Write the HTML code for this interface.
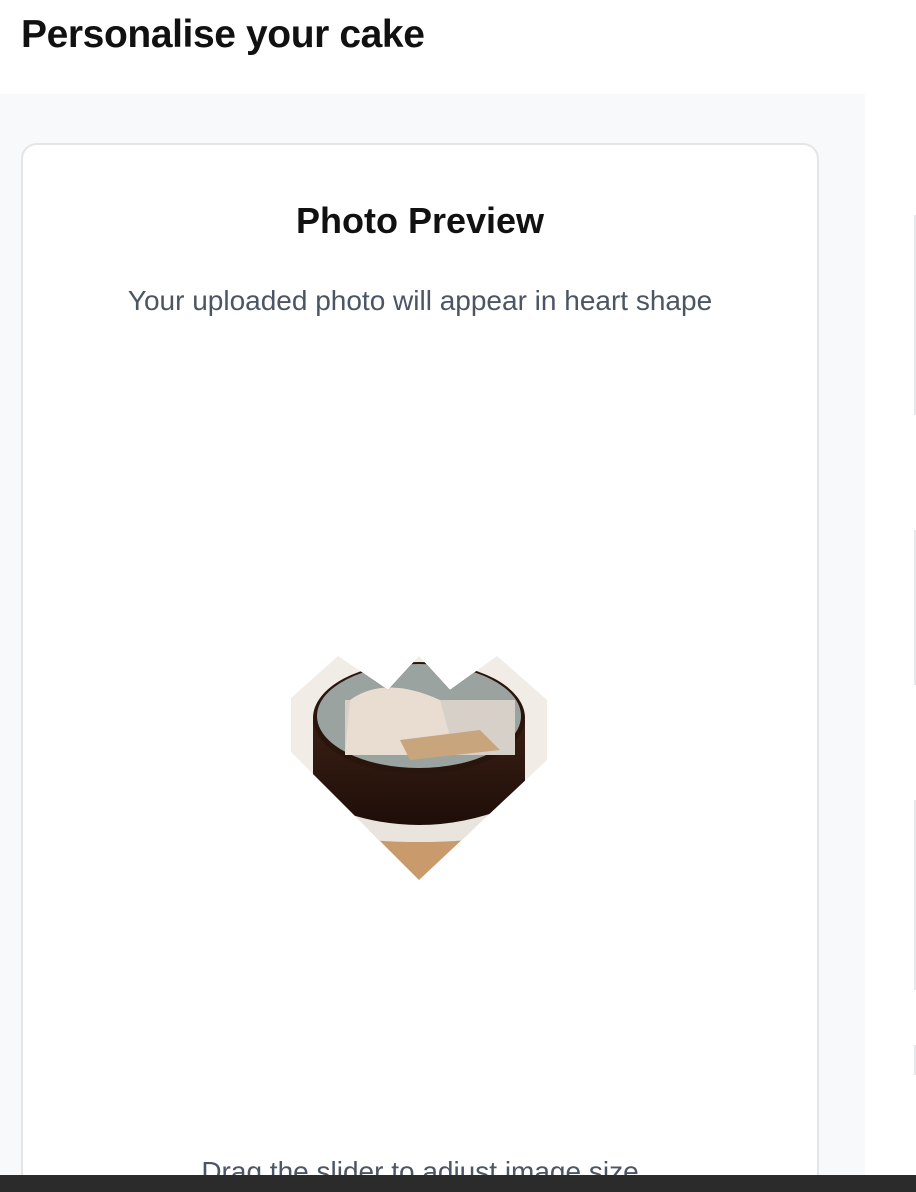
<!DOCTYPE html>
<html><head><style>
html,body{margin:0;width:916px;height:1192px;overflow:hidden;background:#fff;font-family:"Liberation Sans",sans-serif;position:relative}
h1{position:absolute;left:21px;top:13px;margin:0;font-size:39px;font-weight:bold;color:#111;letter-spacing:-0.4px}
.panel{position:absolute;left:0;top:94px;width:865px;height:1081px;background:#f8f9fb;overflow:hidden}
.card{position:absolute;left:21px;top:49px;width:794px;height:1100px;background:#fff;border:2px solid #e4e5e7;border-radius:16px}
.t{position:absolute;left:0;width:100%;text-align:center}
.bar{position:absolute;left:0;top:1175px;width:916px;height:17px;background:#2b2b2b}
.ln{position:absolute;left:914px;width:2px;background:#e6e7e9}
</style></head><body>
<h1>Personalise your cake</h1>
<div class="panel"><div class="card">
<div class="t" style="top:55px;font-size:36px;font-weight:bold;color:#111">Photo Preview</div>
<div class="t" style="top:140px;font-size:28px;color:#4b5563">Your uploaded photo will appear in heart shape</div>
<div class="t" style="top:1011px;font-size:28px;color:#4b5563">Drag the slider to adjust image size</div>
</div></div>
<svg style="position:absolute;left:0;top:0" width="916" height="1192">
<defs>
<clipPath id="h"><polygon points="291,698 338,656 388,690 419,656 450,690 497,656 547,700 547,760 419,880 291,752"/></clipPath>
<linearGradient id="b" x1="0" y1="0" x2="0" y2="1"><stop offset="0" stop-color="#3a1f14"/><stop offset="1" stop-color="#1e0e08"/></linearGradient>
</defs>
<g clip-path="url(#h)">
<rect x="280" y="650" width="280" height="240" fill="#f1ece6"/>
<rect x="280" y="830" width="280" height="60" fill="#c89a6c"/>
<ellipse cx="419" cy="820" rx="118" ry="22" fill="#eae4de"/>
<path d="M313 720 L313 800 Q419 850 525 800 L525 720 Z" fill="url(#b)"/>
<ellipse cx="419" cy="718" rx="106" ry="56" fill="#2a150c"/>
<ellipse cx="419" cy="716" rx="102" ry="52" fill="#9aa3a0"/>
<rect x="345" y="700" width="170" height="55" fill="#d6d0c8"/>
<path d="M350 700 Q385 675 440 700 L455 755 L345 755 Z" fill="#e8ddd0"/>
<path d="M400 740 L480 730 L500 750 L410 760 Z" fill="#c9a57e"/>
</g>
</svg>
<div class="ln" style="top:215px;height:200px"></div>
<div class="ln" style="top:530px;height:155px"></div>
<div class="ln" style="top:800px;height:190px"></div>
<div class="ln" style="top:1045px;height:30px"></div>
<div class="bar"></div>
</body></html>
